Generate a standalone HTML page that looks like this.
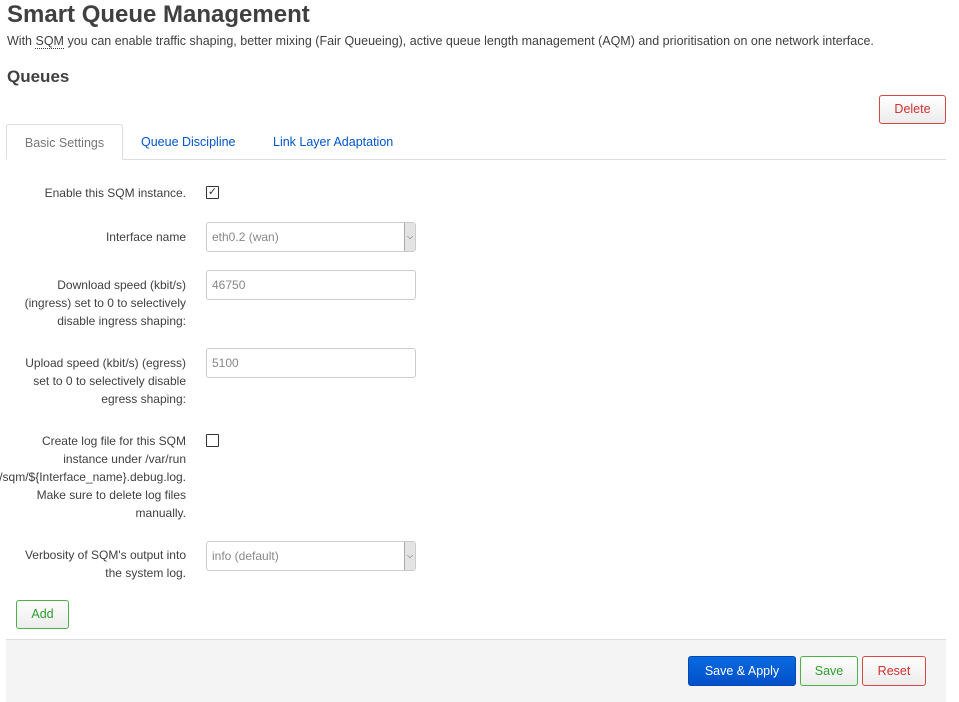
<!DOCTYPE html>
<html><head><meta charset="utf-8"><style>
*{box-sizing:border-box;margin:0;padding:0}
body{width:959px;height:702px;overflow:hidden;background:#fff;font-family:"Liberation Sans",Arial,sans-serif;color:#404040;position:relative}
.a{position:absolute}
h1{position:absolute;left:7px;top:1px;font-size:24px;font-weight:bold;color:#404040}
.desc{left:7px;top:34px;font-size:12.5px;color:#404040}
.desc u{text-decoration:none;border-bottom:1px dotted #404040}
h2{position:absolute;left:7px;top:67px;font-size:17px;font-weight:bold;color:#404040}
.btn{position:absolute;border-radius:3px;font-size:12.5px;text-align:center;background:linear-gradient(#fff,#ececec);border:1px solid}
.tabline{left:6px;top:159px;width:940px;height:1px;background:#ddd}
.tab{top:124px;height:36px;font-size:12.5px;line-height:36px}
.lbl{right:773px;text-align:right;font-size:12px;line-height:18px;color:#404040;width:190px}
.inp{left:206px;width:210px;height:30px;border:1px solid #ccc;border-radius:3px;font-size:12px;color:#888;padding-left:5px;line-height:28px;background:#fff}
.dd{position:absolute;right:0;top:0;width:11px;height:28px;background:#e3e3e3;border-left:1px solid #aaa;font-size:8px;line-height:28px;text-align:center;color:#555}
.cb{left:206px;width:13px;height:13px;border:1px solid #333;border-radius:1px;font-size:11px;line-height:11px;text-align:center;color:#333}
</style></head><body>
<h1>Smart Queue Management</h1>
<div class="a desc">With <u>SQM</u> you can enable traffic shaping, better mixing (Fair Queueing), active queue length management (AQM) and prioritisation on one network interface.</div>
<h2>Queues</h2>
<div class="btn" style="left:879px;top:95px;width:67px;height:29px;line-height:27px;color:#d03030;border-color:#d54848">Delete</div>
<div class="a tabline"></div>
<div class="a tab" style="left:6px;width:117px;border:1px solid #ddd;border-bottom:1px solid #fff;border-radius:3px 3px 0 0;background:#fff;color:#777;text-align:center">Basic Settings</div>
<div class="a tab" style="left:141px;color:#0055cc">Queue Discipline</div>
<div class="a tab" style="left:273px;color:#0055cc">Link Layer Adaptation</div>

<div class="a lbl" style="top:184px">Enable this SQM instance.</div>
<div class="a cb" style="top:186px">✓</div>
<div class="a lbl" style="top:228px">Interface name</div>
<div class="a inp" style="top:222px">eth0.2 (wan)<div class="dd">⌵</div></div>
<div class="a lbl" style="top:276px">Download speed (kbit/s)<br>(ingress) set to 0 to selectively<br>disable ingress shaping:</div>
<div class="a inp" style="top:270px">46750</div>
<div class="a lbl" style="top:354px">Upload speed (kbit/s) (egress)<br>set to 0 to selectively disable<br>egress shaping:</div>
<div class="a inp" style="top:348px">5100</div>
<div class="a lbl" style="top:432px">Create log file for this SQM<br>instance under /var/run<br>/sqm/${Interface_name}.debug.log.<br>Make sure to delete log files<br>manually.</div>
<div class="a cb" style="top:434px"></div>
<div class="a lbl" style="top:546px">Verbosity of SQM's output into<br>the system log.</div>
<div class="a inp" style="top:541px">info (default)<div class="dd">⌵</div></div>

<div class="btn" style="left:16px;top:600px;width:53px;height:29px;line-height:27px;color:#2e9e2e;border-color:#4bb04b">Add</div>
<div class="a" style="left:6px;top:639px;width:940px;height:63px;background:#f4f4f4;border-top:1px solid #ddd"></div>
<div class="btn" style="left:688px;top:656px;width:108px;height:30px;line-height:28px;color:#fff;background:linear-gradient(#0a6ae0,#0050c8);border-color:#0048b8">Save &amp; Apply</div>
<div class="btn" style="left:800px;top:656px;width:58px;height:30px;line-height:28px;color:#2e9e2e;border-color:#4bb04b">Save</div>
<div class="btn" style="left:862px;top:656px;width:64px;height:30px;line-height:28px;color:#d03030;border-color:#d54848">Reset</div>
</body></html>
